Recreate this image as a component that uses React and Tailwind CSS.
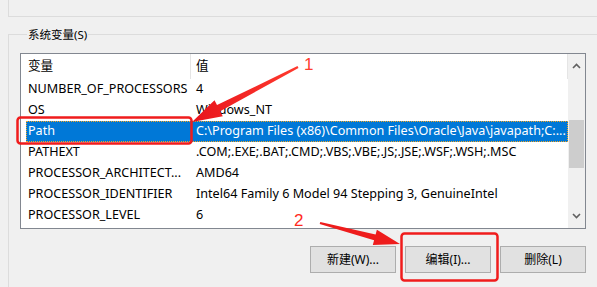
import React from 'react';

const rows = [
  ['NUMBER_OF_PROCESSORS', '4'],
  ['OS', 'Windows_NT'],
  ['Path', 'C:\\Program Files (x86)\\Common Files\\Oracle\\Java\\javapath;C:...'],
  ['PATHEXT', '.COM;.EXE;.BAT;.CMD;.VBS;.VBE;.JS;.JSE;.WSF;.WSH;.MSC'],
  ['PROCESSOR_ARCHITECT...', 'AMD64'],
  ['PROCESSOR_IDENTIFIER', 'Intel64 Family 6 Model 94 Stepping 3, GenuineIntel'],
  ['PROCESSOR_LEVEL', '6'],
];

// tapered arrow: thin tail, wide head
const arrowPoints = (tx, ty, hx, hy, headLen, headW, tailW, neckW) => {
  const dx = hx - tx;
  const dy = hy - ty;
  const len = Math.hypot(dx, dy);
  const ux = dx / len;
  const uy = dy / len;
  const nx = -uy;
  const ny = ux;
  const bx = hx - ux * headLen;
  const by = hy - uy * headLen;
  const pts = [
    [tx + nx * tailW, ty + ny * tailW],
    [bx + nx * neckW, by + ny * neckW],
    [bx + nx * headW, by + ny * headW],
    [hx, hy],
    [bx - nx * headW, by - ny * headW],
    [bx - nx * neckW, by - ny * neckW],
    [tx - nx * tailW, ty - ny * tailW],
  ];
  return pts.map((p) => p.map((v) => v.toFixed(1)).join(',')).join(' ');
};

const Chevron = ({ up }) => (
  <svg width="9" height="6" viewBox="0 0 9 6">
    <polyline
      points={up ? '1,5 4.5,1.5 8,5' : '1,1 4.5,4.5 8,1'}
      fill="none"
      stroke="#606060"
      strokeWidth="1.6"
    />
  </svg>
);

const Button = ({ children }) => (
  <button className="w-[86px] h-[27px] bg-[#e1e1e1] border border-[#adadad] text-[12px] text-black">
    {children}
  </button>
);

export default function App() {
  return (
    <div
      className="relative w-[597px] h-[287px] overflow-hidden bg-[#f0f0f0] text-[12px] text-black"
      style={{ fontFamily: '"Noto Sans", "Noto Sans CJK SC", sans-serif' }}
    >
      {/* upper group box, cut off */}
      <div className="ml-[8px] h-[17px] border-l border-b border-[#dcdcdc]" />

      <fieldset className="ml-[8px] mt-[9px] h-[300px] border-l border-t border-[#dcdcdc] pl-[11px]">
        <legend className="ml-[7px] px-[1px] leading-[17px] text-[11.5px]">系统变量(S)</legend>

        <div className="mt-[10px] w-[566px] h-[176px] border border-[#828790] bg-white flex">
          <div className="flex-1 flex flex-col text-[12.6px]">
            {/* header */}
            <div className="h-[25px] flex items-center">
              <div className="w-[170px] h-full pl-[7px] flex items-center border-r border-[#e5e5e5]">变量</div>
              <div className="flex-1 h-full pl-[5px] flex items-center border-r border-[#e5e5e5]">值</div>
            </div>
            {rows.map(([k, v]) => {
              const sel = k === 'Path';
              return (
                <div
                  key={k}
                  className={
                    sel
                      ? 'ml-[5px] h-[21px] flex items-center whitespace-nowrap bg-[#0078d7] text-white outline-1 outline-dotted outline-[#f5a623] -outline-offset-1'
                      : 'ml-[5px] h-[21px] flex items-center whitespace-nowrap'
                  }
                >
                  <div className="w-[165px] pl-[2px] overflow-hidden">{k}</div>
                  <div className="flex-1 pl-[5px] overflow-hidden">{v}</div>
                </div>
              );
            })}
          </div>
          {/* scrollbar */}
          <div className="w-[17px] bg-[#f0f0f0] flex flex-col items-center">
            <div className="h-[22px] flex items-center justify-center pt-[2px]">
              <Chevron up />
            </div>
            <div className="mt-[44px] w-[15px] h-[48px] bg-[#cdcdcd]" />
            <div className="flex-1" />
            <div className="h-[22px] flex items-center justify-center pb-[2px]">
              <Chevron />
            </div>
          </div>
        </div>

        <div className="mt-[17px] w-[566px] flex justify-end gap-[9px]">
          <Button>新建(W)...</Button>
          <Button>编辑(I)...</Button>
          <Button>删除(L)</Button>
        </div>
      </fieldset>

      {/* annotations */}
      <svg className="absolute inset-0 pointer-events-none" width="597" height="287">
        <defs>
          <linearGradient id="ga" x1="0" y1="0" x2="1" y2="0">
            <stop offset="0" stopColor="#e8141c" />
            <stop offset="1" stopColor="#ff3a2e" />
          </linearGradient>
        </defs>
        <rect x="17.5" y="117.5" width="174" height="26" rx="3" fill="none" stroke="#f01c1c" strokeWidth="2.5" />
        <rect x="401.5" y="233.5" width="96" height="47" rx="3" fill="none" stroke="#f01c1c" strokeWidth="2.5" />
        <polygon points={arrowPoints(298, 67, 192, 122, 30, 9, 1, 3.5)} fill="url(#ga)" />
        <polygon points={arrowPoints(320, 223, 400, 244, 26, 8, 1, 3)} fill="#ee1c1c" />
        <text x="304" y="70" fontSize="17" fill="#ff3d2e" fontFamily="Liberation Sans, sans-serif">1</text>
        <text x="294" y="226" fontSize="17" fill="#ff2a1e" fontFamily="Liberation Sans, sans-serif">2</text>
      </svg>
    </div>
  );
}
